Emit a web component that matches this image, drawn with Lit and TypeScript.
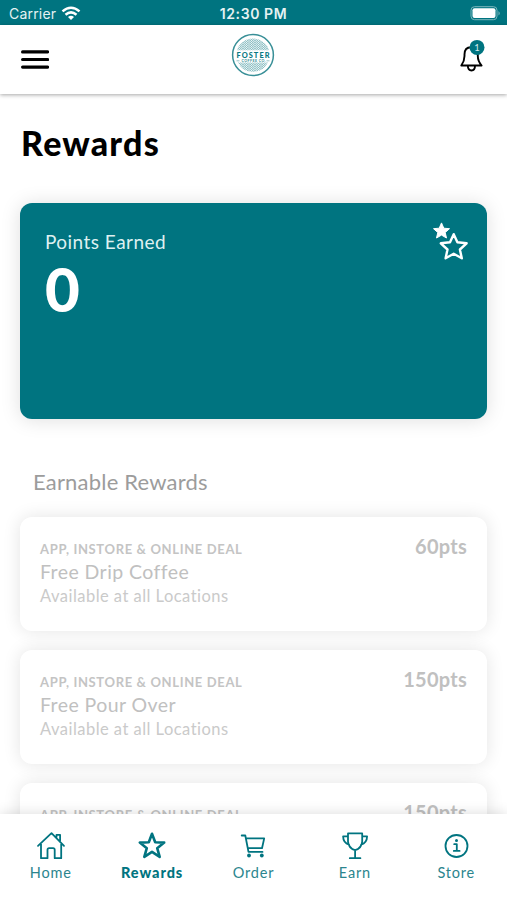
import { LitElement, html, css, svg, nothing } from "lit";
import { customElement, property } from "lit/decorators.js";
import { classMap } from "lit/directives/class-map.js";

const STAR = "M15 2.8L18.2 11.2L27.2 11.6L20.2 17.2L22.7 25.9L15 20.9L7.3 25.9L9.8 17.2L2.8 11.6L11.8 11.2Z";

const icons = {
  home: svg`<path d="M2 14.8L15.5 2.2L28 14.8M5 13v14.2h6.5v-8.4q0-1.6 1.6-1.6h4q1.6 0 1.6 1.6v8.4h6.5V13M20.5 6V3.8h3.600v5.600"/>`,
  star: svg`<path stroke-width="2.6" d=${STAR}/>`,
  cart: svg`<path d="M3.700 4.500h3.600l3.200 16.400H24.500M8 7.400h18.200l-2.200 9.800H10.200"/><circle cx="11" cy="24.500" r="1.900" class="solid"/><circle cx="23.800" cy="24.500" r="1.900" class="solid"/>`,
  trophy: svg`<path d="M8 2.400h14.200v8.200q-.6 6.600-7.100 8.600q-6.500-2-7.100-8.600ZM8 5.300H3.100q.1 6.700 6 8.400M22.200 5.300h4.900q-.1 6.700-6 8.400M15.100 19.200v7.800M9.800 27.200h10.600"/>`,
  info: svg`<circle cx="15.500" cy="15" r="11"/><path d="M13.200 13.200h2.600v6.400M12.800 19.900h5.800"/><circle cx="15.500" cy="9.600" r="1.500" class="solid"/>`,
};

@customElement("reward-card")
class RewardCard extends LitElement {
  @property() points = "";
  @property() name = "";
  static styles = css`
    :host { display: block; box-sizing: border-box; height: 114.5px; background: #fff; border-radius: 12px; padding: 22.5px 20px 0; box-shadow: 0 0 18px rgba(0, 0, 0, 0.11); }
    .row { display: flex; justify-content: space-between; height: 20px; white-space: nowrap; }
    .kind { font-size: 13px; font-weight: 700; line-height: 20px; letter-spacing: 0.65px; color: #c4c4c4; }
    .points { font-size: 20px; font-weight: 700; line-height: 14px; letter-spacing: 0.25px; color: #c0c0c0; }
    .name { font-size: 19.5px; line-height: 26px; letter-spacing: 0.42px; color: #c0c0c0; }
    .where { font-size: 16.5px; line-height: 22px; letter-spacing: 0.47px; color: #cacaca; }
  `;
  render() {
    return html`
      <div class="row"><span class="kind">APP, INSTORE &amp; ONLINE DEAL</span><span class="points">${this.points}pts</span></div>
      ${this.name ? html`<div class="name">${this.name}</div><div class="where">Available at all Locations</div>` : nothing}`;
  }
}

@customElement("app-root")
class AppRoot extends LitElement {
  static styles = css`
    :host { display: flex; flex-direction: column; height: 900px; overflow: hidden; background: #fff; font-family: Lato, "Open Sans", sans-serif; color: #000; }
    svg { display: block; fill: none; }
    .status { height: 25px; flex: none; background: #007480; color: #e5f2f3; display: grid; grid-template-columns: 1fr auto 1fr; align-items: center; padding: 2px 6px 0 9px; box-sizing: border-box; font-family: Inter, sans-serif; font-size: 14px; }
    .carrier { display: flex; align-items: center; gap: 5px; letter-spacing: 0.2px; }
    .time { font-weight: 600; letter-spacing: 0.6px; margin-right: 3px; }
    .battery { justify-self: end; }
    .header { height: 69px; flex: none; display: grid; grid-template-columns: 1fr auto 1fr; padding: 0 22px 0 21px; box-shadow: 0 1px 4px rgba(0, 0, 0, 0.35); position: relative; }
    .menu { margin-top: 24px; }
    .logo { margin-top: 8px; }
    .bell { margin-top: 14px; justify-self: end; }
    .hatch { fill: url(#hatch); }
    .content { flex: 1; min-height: 0; overflow: hidden; padding: 0 20px; }
    h1 { margin: 29px 0 0 1px; font-size: 34px; line-height: 40px; font-weight: 900; letter-spacing: 1.2px; }
    .summary { box-sizing: border-box; height: 215.5px; margin-top: 40px; border-radius: 12px; background: #007480; color: #fff; box-shadow: 0 1px 20px rgba(0, 0, 0, 0.13); display: flex; justify-content: space-between; padding: 18px 18px 0 25px; }
    .label { font-size: 19px; line-height: 42px; letter-spacing: 0.46px; color: #def0f1; }
    .total { font-size: 60px; line-height: 52px; font-weight: 900; }
    h2 { margin: 48px 0 20px 13px; font-size: 22px; line-height: 30px; font-weight: 400; letter-spacing: 0.2px; color: #9c9c9c; }
    .list { display: flex; flex-direction: column; gap: 18.5px; }
    .nav { height: 86px; flex: none; display: grid; grid-template-columns: repeat(5, 1fr); background: #fff; box-shadow: 0 -1px 12px rgba(0, 0, 0, 0.13); position: relative; }
    .tab { display: flex; flex-direction: column; align-items: center; padding-top: 17px; color: #2b858e; font-size: 14.5px; line-height: 24px; letter-spacing: 0.8px; }
    .tab svg { stroke: #007480; stroke-width: 1.8; stroke-linejoin: round; stroke-linecap: round; }
    .solid { fill: #007480; stroke: none; }
    .active { font-weight: 900; color: #007480; letter-spacing: 0.95px; }
  `;
  tab(label: string, icon: unknown, active = false) {
    return html`<div class=${classMap({ tab: true, active })}><svg width="30" height="30" viewBox="0 0 30 30">${icon}</svg>${label}</div>`;
  }
  render() {
    return html`
      <div class="status">
        <div class="carrier">Carrier
          <svg width="20" height="15" viewBox="0 0 20 15" stroke="#fff" stroke-width="2.5"><path d="M1.5 5.4Q10-2 18.5 5.4M4.5 8.7Q10 4 15.5 8.7"/><path d="M7 11Q10 8.7 13 11L10 14Z" fill="#fff" stroke="none"/></svg>
        </div>
        <div class="time">12:30 PM</div>
        <svg class="battery" width="31" height="15" viewBox="0 0 31 15"><rect x="1" y=".7" width="26" height="13" rx="3.5" stroke="#7db7bd"/><rect x="2.5" y="2.3" width="23" height="9.8" rx="2" fill="#fff"/><path d="M28.5 5q2.5 2.300 0 4.600Z" fill="#7db7bd"/></svg>
      </div>
      <div class="header">
        <svg class="menu" width="28" height="20" viewBox="0 0 28 20" stroke="#000" stroke-width="3.2" stroke-linecap="round"><path d="M1.600 2.900h25M1.600 10.500h25M1.600 18.100h25"/></svg>
        <svg class="logo" width="44" height="44" viewBox="0 0 44 44">
          <defs><pattern id="hatch" width="2.4" height="2" patternUnits="userSpaceOnUse"><path d="M0 1.600L1.200 .5L2.400 1.600" stroke="#3d939b" stroke-width=".7"/></pattern></defs>
          <circle cx="22" cy="22" r="20.4" stroke="#388f97" stroke-width="1.5"/>
          <path class="hatch" d="M6 17.300A16.700 16.700 0 0 1 38 17.300ZM7 29.500H37A16.700 16.700 0 0 1 7 29.500Z"/>
          <text x="5.5" y="25" textLength="33" font-size="7.4" font-weight="900" fill="#087983">FOSTER</text>
          <text x="10.5" y="29.300" textLength="24" font-size="3.600" font-weight="700" fill="#348d95">COFFEE CO.</text>
          <path d="M5.500 27.800h3M35.500 27.800h3" stroke="#69a9ae" stroke-width=".7"/>
        </svg>
        <svg class="bell" width="26" height="34" viewBox="0 0 26 34">
          <path d="M2.300 26.500Q5.500 22 5.500 17V15.500Q5.500 8.200 12 8.200T18.800 15.500V17Q18.800 22 22.600 26.500ZM8.800 26.800Q9 31.500 12.500 31.500T16 26.800" stroke="#000" stroke-width="1.900" stroke-linejoin="round"/>
          <circle cx="18" cy="8.400" r="7.500" fill="#007480"/><text x="18" y="11.800" text-anchor="middle" font-size="9.500" fill="#d4eaec">1</text>
        </svg>
      </div>
      <div class="content">
        <h1>Rewards</h1>
        <div class="summary">
          <div><div class="label">Points Earned</div><div class="total">0</div></div>
          <svg width="38" height="42" viewBox="0 0 38 42"><path fill="#fff" stroke="#fff" stroke-linejoin="round" d="M10.500 1.900L12.800 7.200L18.500 7.700L14.200 11.500L15.500 17L10.500 14.100L5.500 17L6.800 11.500L2.500 7.700L8.200 7.200Z"/><path stroke="#fff" stroke-width="2.400" stroke-linejoin="round" d="M22.700 13.200L26.400 21.200L35.600 22.300L28.900 28.500L30.800 37.300L22.700 32.800L14.600 37.300L16.500 28.500L9.800 22.300L19 21.200Z"/></svg>
        </div>
        <h2>Earnable Rewards</h2>
        <div class="list">
          <reward-card points="60" name="Free Drip Coffee"></reward-card>
          <reward-card points="150" name="Free Pour Over"></reward-card>
          <reward-card points="150"></reward-card>
        </div>
      </div>
      <div class="nav">
        ${this.tab("Home", icons.home)}
        ${this.tab("Rewards", icons.star, true)}
        ${this.tab("Order", icons.cart)}
        ${this.tab("Earn", icons.trophy)}
        ${this.tab("Store", icons.info)}
      </div>`;
  }
}
